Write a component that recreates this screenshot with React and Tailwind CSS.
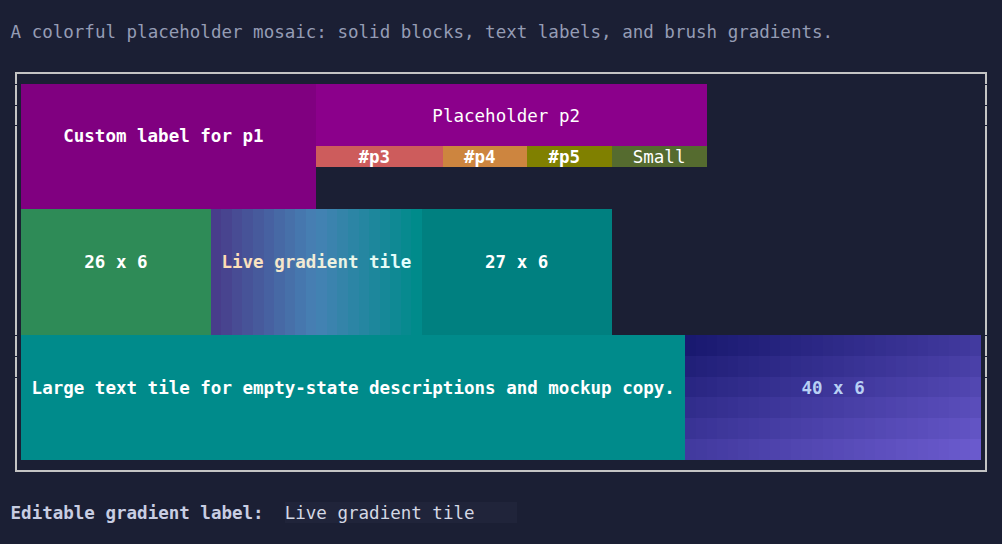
import { useState } from 'react'

const hex = (h) => [1, 3, 5].map((i) => parseInt(h.slice(i, i + 2), 16))
const mix = (a, b, t) => {
  const x = hex(a)
  const y = hex(b)
  return `rgb(${x.map((v, i) => Math.round(v + (y[i] - v) * t)).join(',')})`
}
const mix3 = (a, b, c, t) => (t <= 0.5 ? mix(a, b, t * 2) : mix(b, c, (t - 0.5) * 2))

function Tile({ className, children, shiftX, shiftY, textClass = 'font-bold text-white' }) {
  return (
    <div
      className={`flex shrink-0 items-center justify-center ${shiftX ? 'pr-[10.55px]' : ''} ${shiftY ? 'pb-[20.92px]' : ''} ${className}`}
    >
      <span className={`whitespace-pre pt-[2px] leading-[20.92px] ${textClass}`}>{children}</span>
    </div>
  )
}

function GradientTile({ label }) {
  const cols = Array.from({ length: 20 }, (_, i) => mix3('#483d8b', '#4682b4', '#008b8b', i / 19))
  const chars = label.split('')
  return (
    <div className="relative flex h-[125.54px] w-[210.95px] shrink-0 items-center justify-center pb-[20.92px]">
      <div className="absolute inset-0 flex">
        {cols.map((c, i) => (
          <div key={i} className="h-full flex-1" style={{ background: c }} />
        ))}
      </div>
      <span className="relative whitespace-pre pt-[2px] font-bold leading-[20.92px]">
        {chars.map((ch, i) => (
          <span key={i} style={{ color: mix('#ffdcb4', '#e0ffff', i / Math.max(chars.length - 1, 1)) }}>
            {ch}
          </span>
        ))}
      </span>
    </div>
  )
}

function DiagonalTile() {
  const cells = []
  for (let r = 0; r < 6; r++) {
    for (let c = 0; c < 28; c++) {
      cells.push(mix('#191970', '#6a5acd', (c / 27 + r / 5) / 2))
    }
  }
  return (
    <div className="relative flex h-[125.54px] w-[295.33px] shrink-0 items-center justify-center pb-[20.92px]">
      <div className="absolute inset-0 grid grid-cols-[repeat(28,1fr)] grid-rows-[repeat(6,1fr)]">
        {cells.map((c, i) => (
          <div key={i} style={{ background: c }} />
        ))}
      </div>
      <span className="relative whitespace-pre pt-[2px] font-bold leading-[20.92px] text-[#b8d0f4]">40 x 6</span>
    </div>
  )
}

export default function App() {
  const [label, setLabel] = useState('Live gradient tile')
  const ticks = ['top-[9.7px]', 'top-[30.6px]', 'top-[51.5px]', 'top-[260.8px]', 'top-[281.7px]', 'top-[302.6px]']

  return (
    <div className="h-[544px] w-full overflow-hidden bg-[#1b1f34] pt-[20.92px] font-['DejaVu_Sans_Mono','Liberation_Mono',monospace] text-[17.52px]">
      <div className="h-[20.92px] whitespace-pre pl-[10.55px] pt-[1px] leading-[20.92px] text-[#959cb4]">
        A colorful placeholder mosaic: solid blocks, text labels, and brush gradients.
      </div>

      <div className="relative ml-[15px] mt-[30.15px] w-[972px] border-2 border-[#c4c4c4] px-[4px] pt-[9.69px] pb-[9.7px]">
        {ticks.map((t) => (
          <div key={t}>
            <span className={`absolute left-[-2px] h-px w-[4px] bg-[#1b1f34] ${t}`} />
            <span className={`absolute right-[-2px] h-px w-[4px] bg-[#1b1f34] ${t}`} />
          </div>
        ))}

        <div className="flex w-[959.81px] flex-col">
          <div className="flex h-[125.54px]">
            <Tile className="h-[125.54px] w-[295.33px] bg-[#800080]" shiftX shiftY>
              Custom label for p1
            </Tile>
            <div className="flex w-[390.25px] shrink-0 flex-col">
              <Tile className="h-[62.77px] w-full bg-[#8b008b]" shiftX textClass="text-white">
                Placeholder p2
              </Tile>
              <div className="flex h-[20.92px]">
                <Tile className="h-full w-[126.57px] bg-[#cd5c5c]" shiftX>#p3</Tile>
                <Tile className="h-full w-[84.38px] bg-[#cd853f]" shiftX>#p4</Tile>
                <Tile className="h-full w-[84.38px] bg-[#808000]" shiftX>#p5</Tile>
                <Tile className="h-full w-[94.93px] bg-[#556b2f]" textClass="text-white">Small</Tile>
              </div>
            </div>
          </div>

          <div className="flex h-[125.54px]">
            <Tile className="h-full w-[189.85px] bg-[#2e8b57]" shiftY>26 x 6</Tile>
            <GradientTile label={label} />
            <Tile className="h-full w-[189.85px] bg-[#008080]" shiftY>27 x 6</Tile>
          </div>

          <div className="flex h-[125.54px]">
            <Tile className="h-full w-[664.48px] bg-[#008b8b]" shiftY textClass="font-semibold text-white">
              Large text tile for empty-state descriptions and mockup copy.
            </Tile>
            <DiagonalTile />
          </div>
        </div>
      </div>

      <div className="mt-[30.15px] flex h-[20.92px] items-center pl-[10.55px] leading-[20.92px]">
        <span className="whitespace-pre pt-[2px] font-bold text-[#c8cde2]">Editable gradient label:</span>
        <input
          value={label}
          onChange={(e) => setLabel(e.target.value)}
          className="ml-[21.09px] h-[20.92px] w-[232.04px] bg-[#20243a] p-0 pt-[1px] text-[17.52px] leading-[20.92px] text-[#d4d8e4] outline-none"
        />
      </div>
    </div>
  )
}
